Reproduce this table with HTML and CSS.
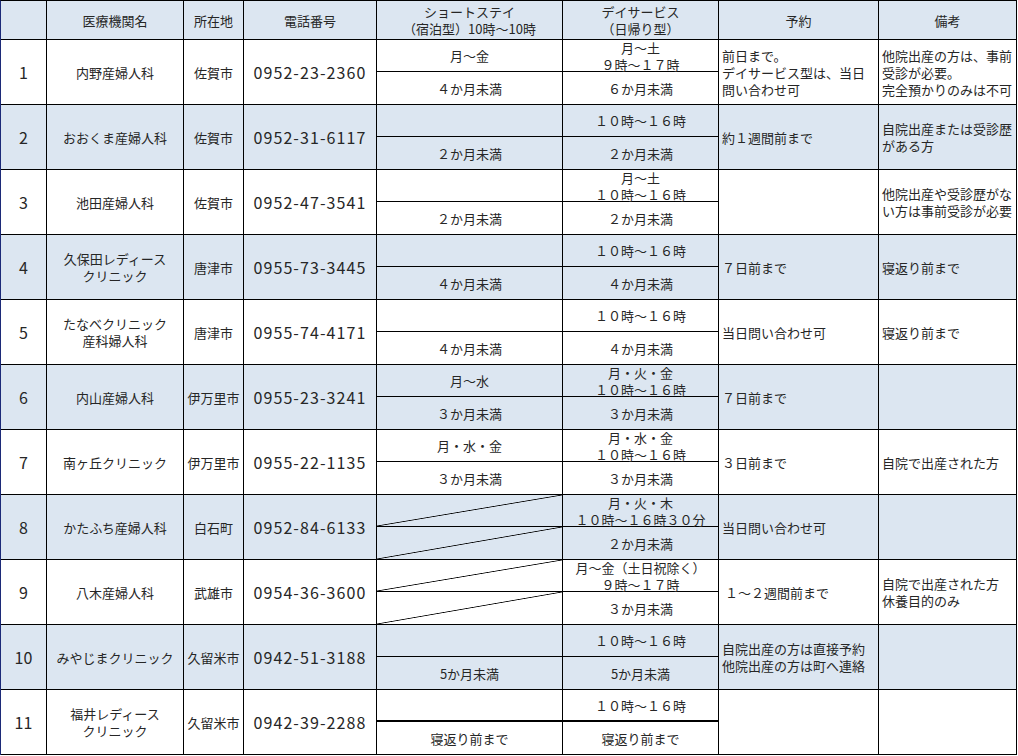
FILE: index.html
```html
<!DOCTYPE html>
<html lang="ja">
<head>
<meta charset="utf-8">
<link rel="stylesheet" href="styles.css">
</head>
<body>
<div class="table">
  <div class="row head">
    <div class="cell c"></div>
    <div class="cell c">医療機関名</div>
    <div class="cell c">所在地</div>
    <div class="cell c">電話番号</div>
    <div class="cell c">ショートステイ<br>（宿泊型）10時～10時</div>
    <div class="cell c">デイサービス<br>（日帰り型）</div>
    <div class="cell c">予約</div>
    <div class="cell c">備考</div>
  </div>

  <div class="row">
    <div class="cell c num">1</div>
    <div class="cell c">内野産婦人科</div>
    <div class="cell c">佐賀市</div>
    <div class="cell c tel">0952-23-2360</div>
    <div class="split"><div class="top">月～金</div><div class="bot">４か月未満</div></div>
    <div class="split"><div class="top">月～土<br>９時～１７時</div><div class="bot">６か月未満</div></div>
    <div class="cell l">前日まで。<br>デイサービス型は、当日<br>問い合わせ可</div>
    <div class="cell l">他院出産の方は、事前<br>受診が必要。<br>完全預かりのみは不可</div>
  </div>

  <div class="row alt">
    <div class="cell c num">2</div>
    <div class="cell c">おおくま産婦人科</div>
    <div class="cell c">佐賀市</div>
    <div class="cell c tel">0952-31-6117</div>
    <div class="split"><div class="top"></div><div class="bot">２か月未満</div></div>
    <div class="split"><div class="top">１０時～１６時</div><div class="bot">２か月未満</div></div>
    <div class="cell l">約１週間前まで</div>
    <div class="cell l">自院出産または受診歴<br>がある方</div>
  </div>

  <div class="row">
    <div class="cell c num">3</div>
    <div class="cell c">池田産婦人科</div>
    <div class="cell c">佐賀市</div>
    <div class="cell c tel">0952-47-3541</div>
    <div class="split"><div class="top"></div><div class="bot">２か月未満</div></div>
    <div class="split"><div class="top">月～土<br>１０時～１６時</div><div class="bot">２か月未満</div></div>
    <div class="cell l"></div>
    <div class="cell l">他院出産や受診歴がな<br>い方は事前受診が必要</div>
  </div>

  <div class="row alt">
    <div class="cell c num">4</div>
    <div class="cell c">久保田レディース<br>クリニック</div>
    <div class="cell c">唐津市</div>
    <div class="cell c tel">0955-73-3445</div>
    <div class="split"><div class="top"></div><div class="bot">４か月未満</div></div>
    <div class="split"><div class="top">１０時～１６時</div><div class="bot">４か月未満</div></div>
    <div class="cell l">７日前まで</div>
    <div class="cell l">寝返り前まで</div>
  </div>

  <div class="row">
    <div class="cell c num">5</div>
    <div class="cell c">たなべクリニック<br>産科婦人科</div>
    <div class="cell c">唐津市</div>
    <div class="cell c tel">0955-74-4171</div>
    <div class="split"><div class="top"></div><div class="bot">４か月未満</div></div>
    <div class="split"><div class="top">１０時～１６時</div><div class="bot">４か月未満</div></div>
    <div class="cell l">当日問い合わせ可</div>
    <div class="cell l">寝返り前まで</div>
  </div>

  <div class="row alt">
    <div class="cell c num">6</div>
    <div class="cell c">内山産婦人科</div>
    <div class="cell c">伊万里市</div>
    <div class="cell c tel">0955-23-3241</div>
    <div class="split"><div class="top">月～水</div><div class="bot">３か月未満</div></div>
    <div class="split"><div class="top">月・火・金<br>１０時～１６時</div><div class="bot">３か月未満</div></div>
    <div class="cell l">７日前まで</div>
    <div class="cell l"></div>
  </div>

  <div class="row">
    <div class="cell c num">7</div>
    <div class="cell c">南ヶ丘クリニック</div>
    <div class="cell c">伊万里市</div>
    <div class="cell c tel">0955-22-1135</div>
    <div class="split"><div class="top">月・水・金</div><div class="bot">３か月未満</div></div>
    <div class="split"><div class="top">月・水・金<br>１０時～１６時</div><div class="bot">３か月未満</div></div>
    <div class="cell l">３日前まで</div>
    <div class="cell l">自院で出産された方</div>
  </div>

  <div class="row alt">
    <div class="cell c num">8</div>
    <div class="cell c">かたふち産婦人科</div>
    <div class="cell c">白石町</div>
    <div class="cell c tel">0952-84-6133</div>
    <div class="split"><div class="top diag"></div><div class="bot diag"></div></div>
    <div class="split"><div class="top">月・火・木<br>１０時～１６時３０分</div><div class="bot">２か月未満</div></div>
    <div class="cell l">当日問い合わせ可</div>
    <div class="cell l"></div>
  </div>

  <div class="row">
    <div class="cell c num">9</div>
    <div class="cell c">八木産婦人科</div>
    <div class="cell c">武雄市</div>
    <div class="cell c tel">0954-36-3600</div>
    <div class="split"><div class="top diag"></div><div class="bot diag"></div></div>
    <div class="split"><div class="top">月～金（土日祝除く）<br>９時～１７時</div><div class="bot">３か月未満</div></div>
    <div class="cell l">&nbsp;１～２週間前まで</div>
    <div class="cell l">自院で出産された方<br>休養目的のみ</div>
  </div>

  <div class="row alt">
    <div class="cell c num">10</div>
    <div class="cell c">みやじまクリニック</div>
    <div class="cell c">久留米市</div>
    <div class="cell c tel">0942-51-3188</div>
    <div class="split"><div class="top"></div><div class="bot">5か月未満</div></div>
    <div class="split"><div class="top">１０時～１６時</div><div class="bot">5か月未満</div></div>
    <div class="cell l">自院出産の方は直接予約<br>他院出産の方は町へ連絡</div>
    <div class="cell l"></div>
  </div>

  <div class="row last">
    <div class="cell c num">11</div>
    <div class="cell c">福井レディース<br>クリニック</div>
    <div class="cell c">久留米市</div>
    <div class="cell c tel">0942-39-2288</div>
    <div class="split"><div class="top thick"></div><div class="bot">寝返り前まで</div></div>
    <div class="split"><div class="top thick">１０時～１６時</div><div class="bot">寝返り前まで</div></div>
    <div class="cell l"></div>
    <div class="cell l"></div>
  </div>
</div>
</body>
</html>
```

FILE: styles.css
```css
* { box-sizing: border-box; }

html, body {
  margin: 0;
  padding: 0;
  background: #ffffff;
}

body {
  font-family: "Noto Sans CJK JP", "Noto Sans", sans-serif;
  font-size: 13px;
  line-height: 17px;
  color: #262626;
}

.table {
  width: 1017px;
  border-top: 1px solid #000;
  border-left: 1px solid #1c2a78;
}

.row {
  display: grid;
  grid-template-columns: 46px 137px 60px 133px 186px 156px 160px 138px;
  height: 65px;
  border-bottom: 1px solid #000;
}

.row.head {
  height: 39px;
  background: #dce6f1;
}

.row.alt {
  background: #dce6f1;
}

.cell {
  border-right: 1px solid #000;
  display: flex;
  align-items: center;
  overflow: hidden;
  white-space: nowrap;
}

.cell.c {
  justify-content: center;
  text-align: center;
}

.cell.l {
  justify-content: flex-start;
  text-align: left;
  padding-left: 3px;
}

.num {
  font-size: 16px;
}

.tel {
  font-size: 16px;
  letter-spacing: 1.1px;
}

.split {
  display: flex;
  flex-direction: column;
  border-right: 1px solid #000;
}

.split .top,
.split .bot {
  display: flex;
  align-items: center;
  justify-content: center;
  text-align: center;
  white-space: nowrap;
}

.split .top {
  height: 32px;
  border-bottom: 1px solid #000;
}

.split .top.thick {
  border-bottom-width: 2px;
}

.split .bot {
  flex: 1;
}

.diag {
  background: linear-gradient(to bottom right,
    transparent calc(50% - 0.8px),
    #000 50%,
    transparent calc(50% + 0.8px));
}
```
